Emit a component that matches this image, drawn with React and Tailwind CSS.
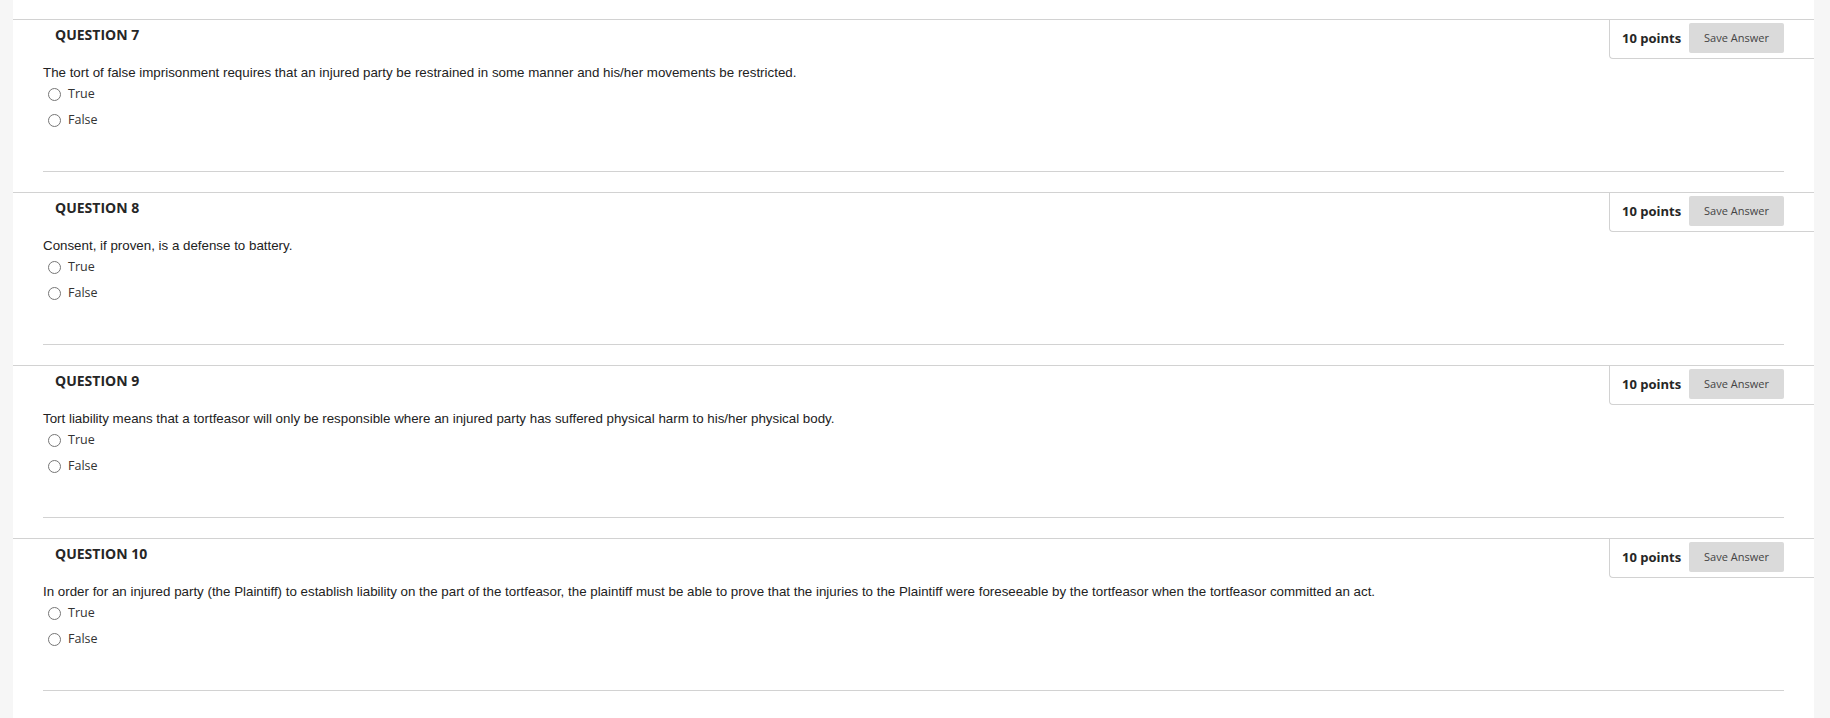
import React from "react";

const questions = [
  { n: 7, text: "The tort of false imprisonment requires that an injured party be restrained in some manner and his/her movements be restricted." },
  { n: 8, text: "Consent, if proven, is a defense to battery." },
  { n: 9, text: "Tort liability means that a tortfeasor will only be responsible where an injured party has suffered physical harm to his/her physical body." },
  { n: 10, text: "In order for an injured party (the Plaintiff) to establish liability on the part of the tortfeasor, the plaintiff must be able to prove that the injuries to the Plaintiff were foreseeable by the tortfeasor when the tortfeasor committed an act." },
];

function Radio({ label }) {
  return (
    <div className="flex items-center h-[20px] pl-[5px]">
      <span className="w-[13px] h-[13px] rounded-full border border-[#767676] bg-white shrink-0" />
      <span className="ml-[7px] text-[12.5px] leading-[20px] text-[#333]" style={{ fontFamily: '"Open Sans", sans-serif' }}>
        {label}
      </span>
    </div>
  );
}

function Question({ n, text }) {
  return (
    <div className="border-t border-[#d2d2d2] h-[173px]">
      <div className="flex items-start justify-between">
        <div
          className="pl-[42px] pt-[6px] text-[14px] leading-[18px] font-bold text-[#262626]"
          style={{ fontFamily: '"Open Sans", sans-serif' }}
        >
          QUESTION {n}
        </div>
        <div className="flex items-center justify-between w-[205px] h-[39px] border-l border-b border-[#d2d2d2] rounded-bl-[4px] pl-[12px] pr-[30px] pt-[3px] pb-[5px] box-border">
          <span className="text-[13px] font-bold text-[#262626] leading-[18px]" style={{ fontFamily: '"Open Sans", sans-serif' }}>
            10 points
          </span>
          <button
            className="w-[95px] h-[30px] bg-[#dadada] rounded-[2px] text-[11px] text-[#444] flex items-center justify-center"
            style={{ fontFamily: '"Open Sans", sans-serif' }}
          >
            Save Answer
          </button>
        </div>
      </div>
      <div className="ml-[30px] mr-[30px]">
        <div
          className="mt-[6px] text-[13.33px] leading-[16px] text-[#222]"
          style={{ fontFamily: '"Liberation Sans", Arial, sans-serif' }}
        >
          {text}
        </div>
        <div className="mt-[3px]">
          <Radio label="True" />
        </div>
        <div className="mt-[6px]">
          <Radio label="False" />
        </div>
        <div className="mt-[41px] border-t border-[#d2d2d2]" />
      </div>
    </div>
  );
}

export default function App() {
  return (
    <div className="flex w-[1830px] h-[718px] bg-white overflow-hidden">
      <div className="w-[13px] bg-[#f6f6f6] shrink-0" />
      <div className="flex-1 bg-white pt-[19px]">
        {questions.map((q) => (
          <Question key={q.n} {...q} />
        ))}
      </div>
      <div className="w-[16px] bg-[#f6f6f6] shrink-0" />
    </div>
  );
}
